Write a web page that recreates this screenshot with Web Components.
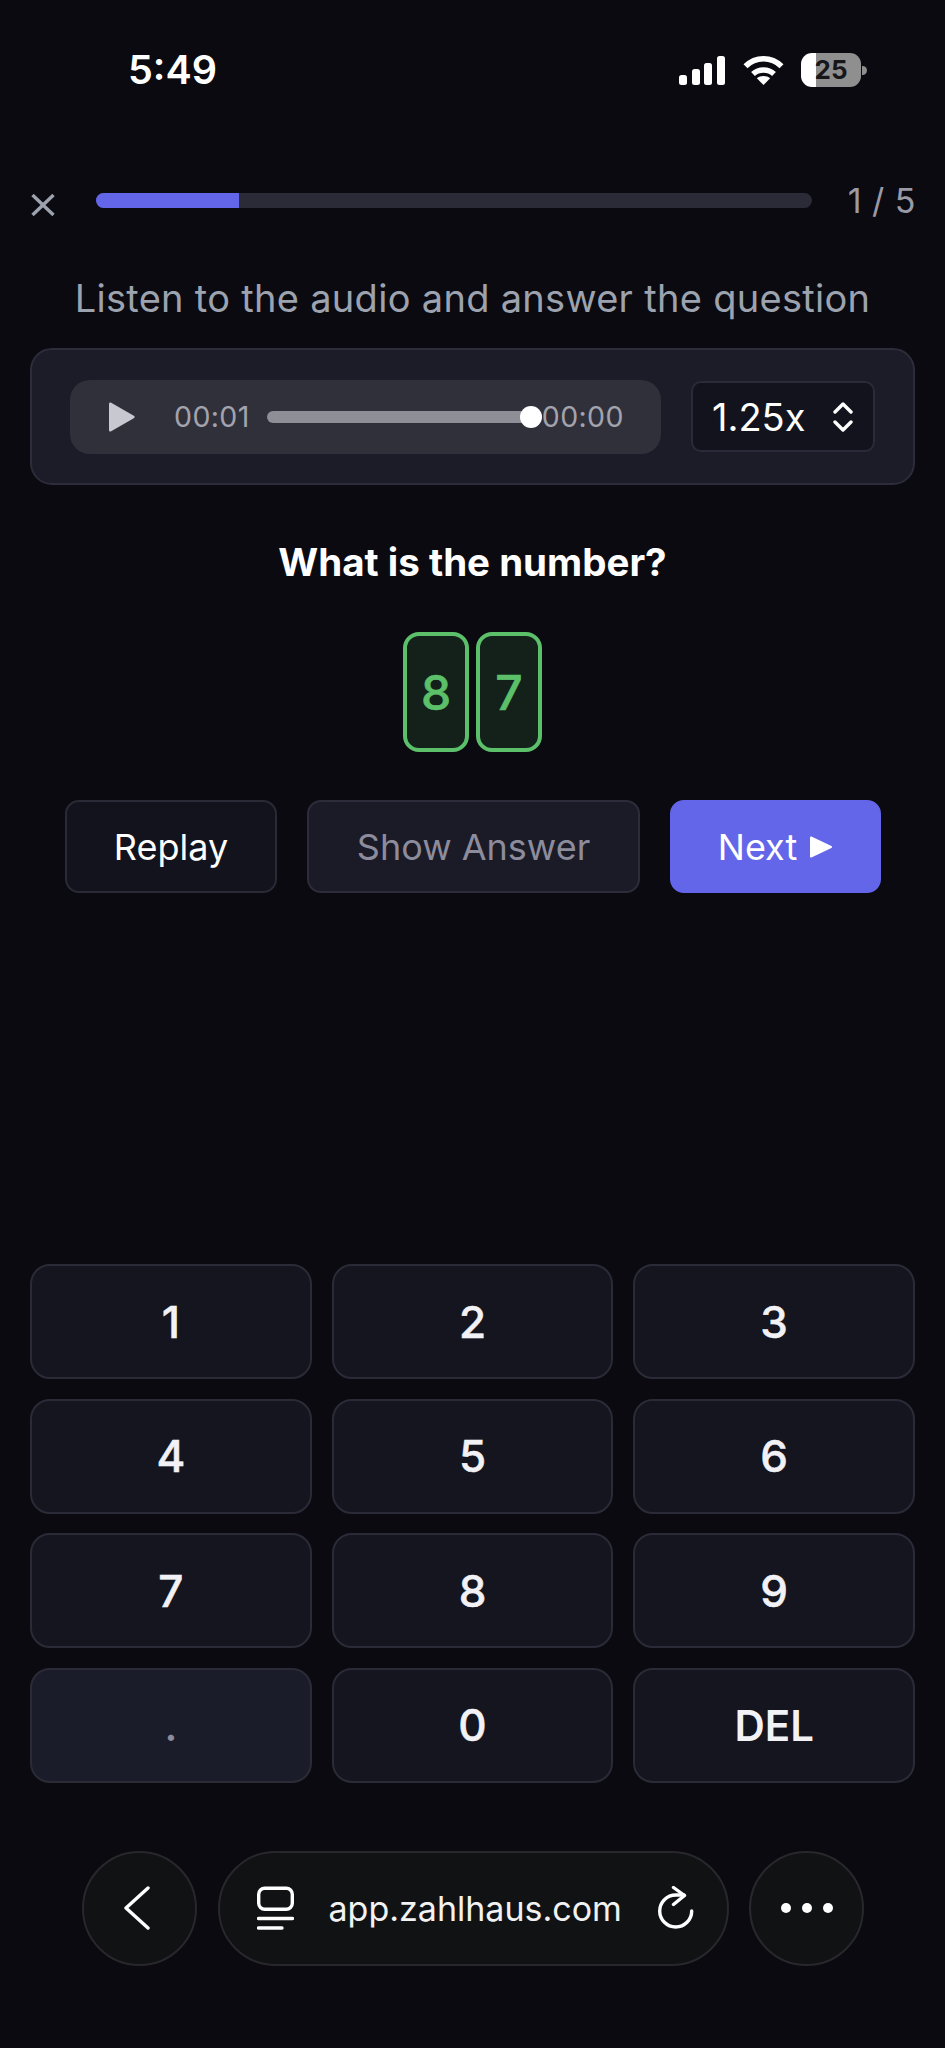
<!DOCTYPE html>
<html lang="en">
<head>
<meta charset="utf-8">
<title>Zahlhaus</title>
<style>
  html,body{margin:0;padding:0;background:#0a0a10;}
  body{font-family:"Inter","Liberation Sans",sans-serif;color:#fff;width:945px;height:2048px;overflow:hidden;}
</style>
</head>
<body>
<status-bar></status-bar>
<quiz-header></quiz-header>
<quiz-prompt>Listen to the audio and answer the question</quiz-prompt>
<audio-card></audio-card>
<quiz-question>What is the number?</quiz-question>
<digit-boxes></digit-boxes>
<action-row></action-row>
<num-pad></num-pad>
<browser-bar></browser-bar>

<script>
function define(name, html) {
  customElements.define(name, class extends HTMLElement {
    constructor() {
      super();
      this.attachShadow({ mode: 'open' }).innerHTML = html;
    }
  });
}

define('status-bar', `
<style>
  :host{display:flex;height:140px;align-items:center;justify-content:space-between;padding:0 78px 0 128px;box-sizing:border-box;}
  .time{font-size:39.500px;font-weight:600;}
  .icons{display:flex;align-items:center;}
  svg{display:block;}
  .signal{margin-right:18px;}
  .wifi{margin-right:17px;}
  .battery{display:flex;align-items:center;}
  .cell{width:60px;height:34px;border-radius:11px;background:linear-gradient(90deg,#fff 0 15px,#8f8f8f 15px);color:#17171a;font-size:26px;font-weight:700;display:flex;align-items:center;justify-content:center;line-height:1;}
  .nub{width:5px;height:9px;margin-left:1px;background:#8f8f8f;border-radius:0 5px 5px 0;}
</style>
<div class="time">5:49</div>
<div class="icons">
  <svg class="signal" width="46" height="29" viewBox="0 0 46 29" fill="#fff">
    <rect x="0" y="19" width="8" height="10" rx="2.500"/>
    <rect x="13" y="13" width="8" height="16" rx="2.500"/>
    <rect x="25" y="7" width="8" height="22" rx="2.500"/>
    <rect x="38" y="0" width="8" height="29" rx="2.500"/>
  </svg>
  <svg class="wifi" width="41" height="30" viewBox="0 0 41 30" fill="none" stroke="#fff" stroke-width="5.600">
    <path d="M2.500 11.200C12.600 1.200 28.400 1.200 38.500 11.200"/>
    <path d="M10 19C15.800 13.600 25.200 13.600 31 19"/>
    <path d="M20.500 30L13.800 23.300C17.600 20.200 23.400 20.200 27.200 23.300Z" fill="#fff" stroke="none"/>
  </svg>
  <div class="battery"><div class="cell">25</div><div class="nub"></div></div>
</div>
`);

define('quiz-header', `
<style>
  :host{display:flex;align-items:center;height:40px;margin-top:40px;padding:0 29px 0 30px;}
  svg{display:block;margin:10px 41px 0 1px;flex:none;}
  .bar{flex:1;height:15px;border-radius:8px;background:#2b2b38;overflow:hidden;}
  .fill{width:20%;height:100%;background:#6366e8;}
  .count{margin-left:36px;font-size:34px;color:#9a9aa6;letter-spacing:.5px;white-space:nowrap;}
</style>
<svg width="24" height="22" viewBox="0 0 24 22" fill="none" stroke="#9ca3af" stroke-width="3.400"><path d="M1.500 1L22.500 21M22.500 1L1.500 21"/></svg>
<div class="bar"><div class="fill"></div></div>
<div class="count">1 / 5</div>
`);

define('quiz-prompt', `
<style>
  :host{display:block;margin-top:55px;text-align:center;font-size:38px;line-height:46px;color:#9ca3af;letter-spacing:.3px;}
</style>
<slot></slot>
`);

define('audio-card', `
<style>
  :host{display:flex;align-items:center;box-sizing:border-box;height:137px;margin:27px 30px 0;padding:0 38px;background:#1c1c28;border:2px solid #2c2c3a;border-radius:22px;justify-content:space-between;}
  .player{display:flex;align-items:center;width:591px;height:74px;box-sizing:border-box;padding-left:38px;background:#30303b;border-radius:20px;}
  .play{display:block;flex:none;margin-right:39px;}
  .time{font-size:28.500px;color:#a3a3ad;white-space:nowrap;letter-spacing:.4px;}
  .track{position:relative;width:264px;height:12px;margin:0 11px 0 17px;background:#8e8e96;border-radius:6px;flex:none;}
  .thumb{position:absolute;right:-11px;top:-5px;width:22px;height:22px;border-radius:50%;background:#fff;}
  .speed{display:flex;align-items:center;box-sizing:border-box;width:184px;height:71px;padding-left:19px;background:#13131d;border:2px solid #2a2a38;border-radius:10px;font-size:38px;color:#fff;}
  .speed svg{display:block;margin-left:28px;}
</style>
<div class="player">
  <svg class="play" width="27" height="30" viewBox="0 0 27 30"><path d="M1 2L1 28C1 29.500 2.300 30 3.200 29.200L25.800 16.200C27 15.400 27 14.600 25.800 13.800L3.200 .8C2.300 0 1 .5 1 2Z" fill="#c8c8d0"/></svg>
  <span class="time">00:01</span>
  <div class="track"><div class="thumb"></div></div>
  <span class="time">00:00</span>
</div>
<div class="speed">1.25x
  <svg width="20" height="30" viewBox="0 0 20 30" fill="none" stroke="#fff" stroke-width="3.400" stroke-linecap="round" stroke-linejoin="round"><path d="M2 10L10 2L18 10M2 20L10 28L18 20"/></svg>
</div>
`);

define('quiz-question', `
<style>
  :host{display:block;margin-top:54px;text-align:center;font-size:38.500px;font-weight:700;line-height:46px;color:#fff;}
</style>
<slot></slot>
`);

define('digit-boxes', `
<style>
  :host{display:flex;justify-content:center;gap:7px;margin-top:47px;}
  div{box-sizing:border-box;width:66px;height:120px;border:4px solid #5cc06a;border-radius:16px;background:#13211a;color:#5cc06a;font-size:48px;font-weight:500;-webkit-text-stroke:.6px #5cc06a;display:flex;align-items:center;justify-content:center;}
</style>
<div>8</div><div>7</div>
`);

define('action-btn', `
<style>
  :host{display:flex;align-items:center;justify-content:center;gap:12px;box-sizing:border-box;height:93px;border:2px solid #2a2a36;border-radius:14px;background:#13131d;color:#fff;font-size:36px;}
  :host([kind=muted]){background:#1b1b28;border-color:#2c2c3a;color:#8c8c9c;}
  :host([kind=primary]){background:#6366e8;border-color:#6366e8;}
</style>
<slot></slot>
`);

define('action-row', `
<style>
  :host{display:grid;grid-template-columns:212px 333px 211px;column-gap:30px;margin:48px 0 0 65px;}
  svg{display:block;}
</style>
<action-btn>Replay</action-btn>
<action-btn kind="muted">Show Answer</action-btn>
<action-btn kind="primary">Next <svg width="24" height="24" viewBox="0 0 24 24" fill="#fff" stroke="#fff" stroke-width="2" stroke-linejoin="round"><path d="M2 2.500L22 12L2 21.500Z"/></svg></action-btn>
`);

define('pad-key', `
<style>
  :host{display:flex;align-items:center;justify-content:center;box-sizing:border-box;height:115px;border:2px solid #2a2b36;border-radius:20px;background:#14151f;color:#f2f2f6;font-size:44px;font-weight:500;-webkit-text-stroke:.5px #f2f2f6;}
  :host([wide]){font-size:42px;font-weight:600;-webkit-text-stroke:0;}
  :host([off]){background:#1b1c29;color:#8c8c9c;-webkit-text-stroke:0;}
</style>
<slot></slot>
`);

define('num-pad', `
<style>
  :host{display:grid;grid-template-columns:repeat(3,1fr);column-gap:20px;row-gap:19.500px;margin:371px 30px 0;}
</style>
<pad-key>1</pad-key><pad-key>2</pad-key><pad-key>3</pad-key>
<pad-key>4</pad-key><pad-key>5</pad-key><pad-key>6</pad-key>
<pad-key>7</pad-key><pad-key>8</pad-key><pad-key>9</pad-key>
<pad-key off>.</pad-key><pad-key>0</pad-key><pad-key wide>DEL</pad-key>
`);

define('browser-bar', `
<style>
  :host{display:flex;gap:20.500px;margin:68px 0 0 82px;color:#f2f2f2;}
  .round,.url{box-sizing:border-box;height:115px;background:#111214;border:2px solid #28282c;border-radius:58px;display:flex;align-items:center;flex:none;}
  .round{width:115px;justify-content:center;}
  .url{width:511px;padding-left:37px;}
  .url span{font-size:34px;margin:0 36px 0 35px;white-space:nowrap;}
  svg{display:block;flex:none;}
</style>
<div class="round">
  <svg width="26" height="44" viewBox="0 0 26 44" fill="none" stroke="#fff" stroke-width="3.400" stroke-linecap="round" stroke-linejoin="round" style="margin-right:6px"><path d="M24 2L2 22L24 42"/></svg>
</div>
<div class="url">
  <svg width="37" height="44" viewBox="0 0 37 44" fill="none" stroke="#fff" stroke-width="3.400" stroke-linecap="round"><rect x="1.700" y="2.200" width="33.600" height="21" rx="6"/><path d="M1.500 32.500H35.500M1.500 42H25"/></svg>
  <span>app.zahlhaus.com</span>
  <svg width="38" height="44" viewBox="0 0 38 44" fill="none" stroke="#fff" stroke-width="3.400" stroke-linecap="round" stroke-linejoin="round"><path d="M33.700 25A16 16 0 1 1 17.700 9H26"/><path d="M15.500 1.500L26.500 9.500L15.500 18.500"/></svg>
</div>
<div class="round">
  <svg width="52" height="10" viewBox="0 0 52 10" fill="#fff"><circle cx="5" cy="5" r="5"/><circle cx="26" cy="5" r="5"/><circle cx="47" cy="5" r="5"/></svg>
</div>
`);
</script>
</body>
</html>
